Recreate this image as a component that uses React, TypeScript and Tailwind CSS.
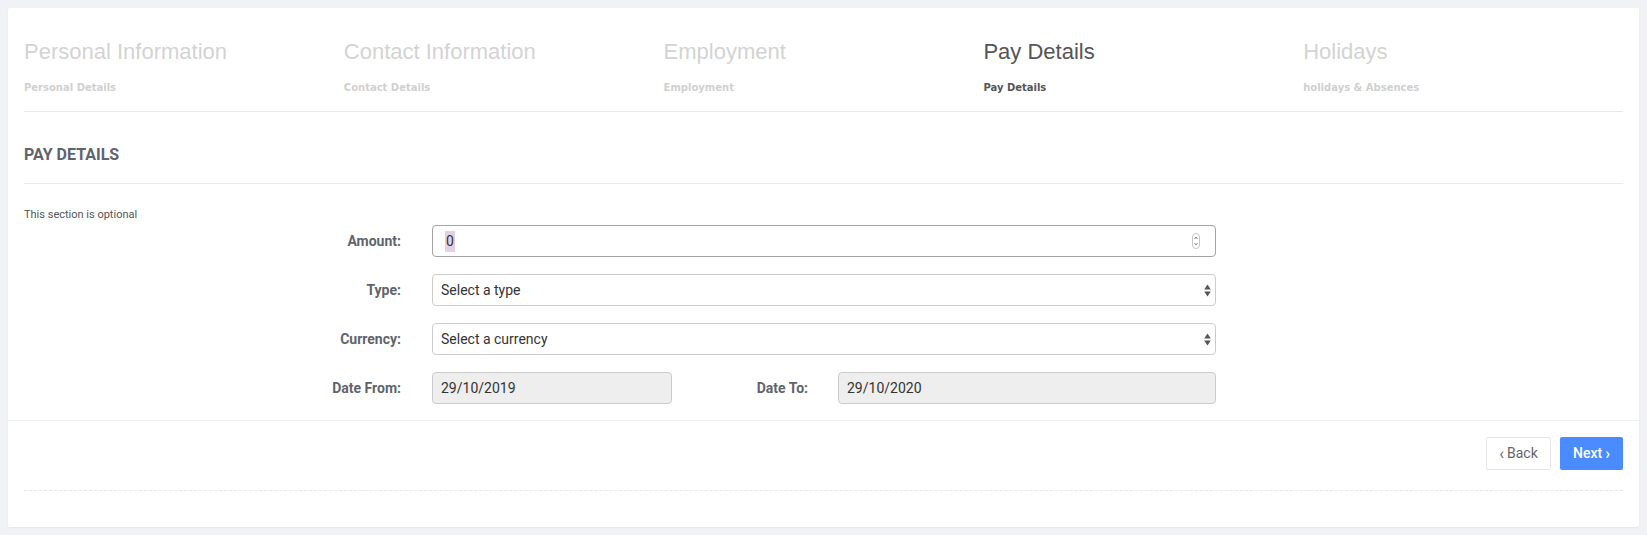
import React from 'react'

const STEPS = [
  { title: 'Personal Information', sub: 'Personal Details' },
  { title: 'Contact Information', sub: 'Contact Details' },
  { title: 'Employment', sub: 'Employment' },
  { title: 'Pay Details', sub: 'Pay Details', active: true },
  { title: 'Holidays', sub: 'holidays & Absences' },
]

const roboto = { fontFamily: 'Roboto, "Liberation Sans", sans-serif' }

function SelectArrows() {
  return (
    <svg width="7" height="13" viewBox="0 0 7 13" className="shrink-0">
      <path d="M3.5 0.5 L6.8 5.5 L0.2 5.5 Z" fill="#555" />
      <path d="M0.2 7.5 L6.8 7.5 L3.5 12.5 Z" fill="#555" />
    </svg>
  )
}

function Spinner() {
  return (
    <svg width="8" height="16" viewBox="0 0 8 16" className="shrink-0">
      <rect x="0.5" y="0.5" width="7" height="15" rx="3.5" fill="#fff" stroke="#c4c4c4" />
      <path d="M2.5 6 L4 4 L5.5 6" fill="none" stroke="#777" strokeWidth="0.9" />
      <path d="M2.5 10 L4 12 L5.5 10" fill="none" stroke="#777" strokeWidth="0.9" />
    </svg>
  )
}

function Label({ children, className = '' }: { children: React.ReactNode; className?: string }) {
  return (
    <div className={`text-right text-[14px] font-bold text-[#5f646b] ${className}`}>{children}</div>
  )
}

function SelectBox({ text }: { text: string }) {
  return (
    <div className="ml-[31px] flex h-[32px] flex-1 items-center justify-between rounded-[4px] border border-[#cccccc] bg-white pl-2 pr-[4px] text-[14px] text-[#333]">
      <span>{text}</span>
      <SelectArrows />
    </div>
  )
}

export default function App() {
  return (
    <div className="min-h-[535px] bg-[#f0f2f5] p-2" style={roboto}>
      <div className="rounded-[2px] bg-white shadow-[0_1px_2px_rgba(0,0,0,0.06)]">
        <div className="px-4">
          {/* wizard steps */}
          <div className="grid grid-cols-5 border-b border-[#e8e8e8] pb-[17px] pt-[31px]">
            {STEPS.map(s => (
              <div key={s.title}>
                <div
                  className={`text-[22px] leading-[26px] ${s.active ? 'text-[#555555]' : 'text-[#d3d3d3]'}`}
                  style={{ fontFamily: '"Liberation Sans", Arial, sans-serif' }}
                >
                  {s.title}
                </div>
                <div
                  className={`mt-[17px] text-[10px] font-bold leading-[12px] ${s.active ? 'text-[#555555]' : 'text-[#d0d0d0]'}`}
                  style={{ fontFamily: '"DejaVu Sans", Verdana, sans-serif' }}
                >
                  {s.sub}
                </div>
              </div>
            ))}
          </div>

          {/* section header */}
          <div className="border-b border-[#ebebeb] pb-[18px] pt-[33px]">
            <h2 className="text-[16px] font-bold leading-[20px] text-[#5f646b]">PAY DETAILS</h2>
          </div>

          {/* form */}
          <div className="flex pb-[16px] pt-6">
            <div className="w-[280px] text-[11px] leading-[14px] text-[#555]">This section is optional</div>
            <div className="mt-[17px] flex w-[912px] flex-col gap-[17px]">
              <div className="flex items-center">
                <Label className="w-[97px]">Amount:</Label>
                <div className="ml-[31px] flex h-[32px] flex-1 items-center justify-between rounded-[4px] border border-[#a4a4a4] bg-white pl-3 pr-[15px] text-[14px] text-[#333]">
                  <span className="bg-[#e4d0e4] px-[1px]">0</span>
                  <Spinner />
                </div>
              </div>
              <div className="flex items-center">
                <Label className="w-[97px]">Type:</Label>
                <SelectBox text="Select a type" />
              </div>
              <div className="flex items-center">
                <Label className="w-[97px]">Currency:</Label>
                <SelectBox text="Select a currency" />
              </div>
              <div className="flex items-center">
                <Label className="w-[97px]">Date From:</Label>
                <div className="ml-[31px] flex h-[32px] w-[240px] items-center rounded-[4px] border border-[#cccccc] bg-[#eeeeee] pl-2 text-[14px] text-[#333]">
                  29/10/2019
                </div>
                <Label className="w-[136px]">Date To:</Label>
                <div className="ml-[30px] flex h-[32px] flex-1 items-center rounded-[4px] border border-[#cccccc] bg-[#eeeeee] pl-2 text-[14px] text-[#333]">
                  29/10/2020
                </div>
              </div>
            </div>
          </div>
        </div>

        {/* footer */}
        <div className="border-t border-[#f0f1f3] px-4 pb-[36px] pt-4">
          <div className="flex justify-end gap-[9px]">
            <button className="flex h-[33px] w-[65px] items-center justify-center gap-[3px] rounded-[2px] border border-[#e6e6e6] bg-white text-[14px] text-[#666]">
              <span className="text-[16px] leading-none">‹</span>Back
            </button>
            <button className="flex h-[33px] w-[63px] items-center justify-center gap-[3px] rounded-[2px] bg-[#4a8cff] text-[14px] font-medium text-white">
              Next<span className="text-[16px] leading-none">›</span>
            </button>
          </div>
          <div className="mt-5 border-t border-dashed border-[#e6e6e6]" />
        </div>
      </div>
    </div>
  )
}
